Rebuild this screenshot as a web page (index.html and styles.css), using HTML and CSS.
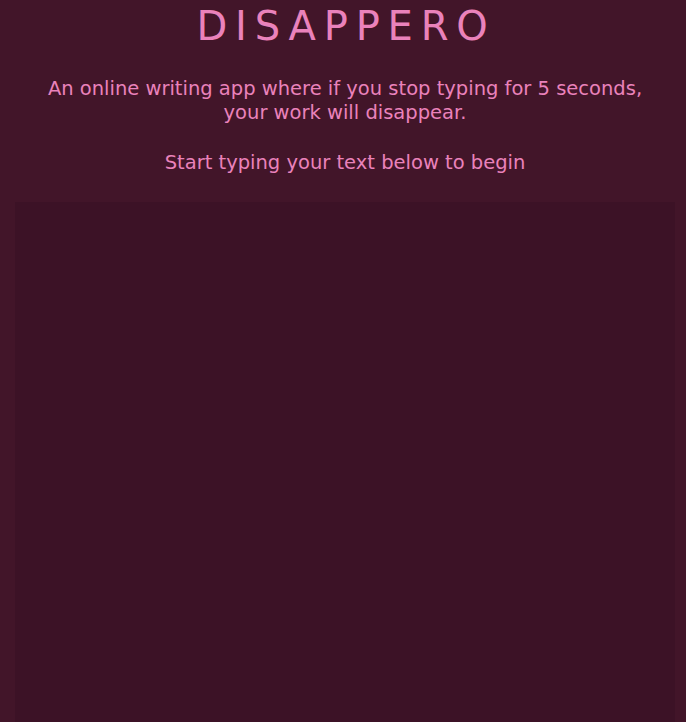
FILE: index.html
```html
<!DOCTYPE html>
<html lang="en">
<head>
<meta charset="utf-8">
<title>Disappero</title>
<link rel="stylesheet" href="styles.css">
</head>
<body>
<main class="page">
  <h1 class="title">DISAPPERO</h1>
  <p class="intro">An online writing app where if you stop typing for 5 seconds,<br>your work will disappear.</p>
  <p class="prompt">Start typing your text below to begin</p>
  <textarea class="editor" aria-label="Your text"></textarea>
</main>
</body>
</html>
```
FILE: styles.css
```css
html, body {
  margin: 0;
  padding: 0;
  background: #421529;
}
.page {
  display: flex;
  flex-direction: column;
  align-items: stretch;
  padding: 0 11px 0 15px;
  font-family: "DejaVu Sans", "Open Sans", sans-serif;
  color: #ea82bb;
  text-align: center;
}
.title {
  margin: 4px 0 0;
  padding-left: 2px;
  font-size: 40px;
  font-weight: 400;
  letter-spacing: 7.8px;
  line-height: 44px;
}
.intro {
  margin: 29px 0 0;
  font-size: 19.5px;
  line-height: 24px;
}
.prompt {
  margin: 26px 0 0;
  font-size: 19.5px;
  line-height: 24px;
}
.editor {
  margin-top: 27px;
  height: 521px;
  border: none;
  outline: none;
  resize: none;
  background: #3c1226;
  color: #ea82bb;
  font-family: inherit;
  font-size: 18px;
  padding: 10px;
  box-sizing: border-box;
}
```
